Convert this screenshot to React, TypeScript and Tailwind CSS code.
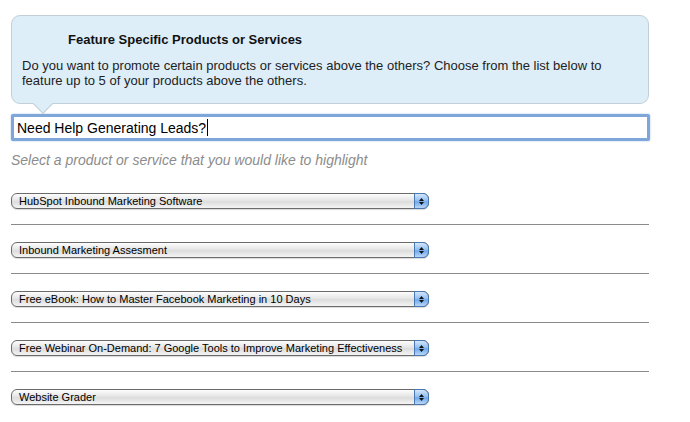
import React from "react";

const items = [
  "HubSpot Inbound Marketing Software",
  "Inbound Marketing Assesment",
  "Free eBook: How to Master Facebook Marketing in 10 Days",
  "Free Webinar On-Demand: 7 Google Tools to Improve Marketing Effectiveness",
  "Website Grader",
];

function FakeSelect({ label }: { label: string }) {
  return (
    <div className="relative flex h-[16px] w-[418px] items-center rounded-[6px] border border-[#6b6b6b] bg-[linear-gradient(#fdfdfd,#e6e6e6_45%,#dcdcdc_55%,#f4f4f4)] pl-[7px] shadow-[0_1px_1px_rgba(0,0,0,0.15)]">
      <span className="text-[11px] leading-none text-black">{label}</span>
      <div className="absolute right-[-1px] top-[-1px] flex h-[16px] w-[15px] flex-col items-center justify-center gap-[1px] rounded-r-[6px] border border-[#4a78b0] bg-[linear-gradient(#d4e6fb,#8fbdf0_50%,#6ea8ea_55%,#b9d7f8)]">
        <svg width="5" height="3" viewBox="0 0 5 3"><path d="M2.5 0L5 3H0z" fill="#111" /></svg>
        <svg width="5" height="3" viewBox="0 0 5 3"><path d="M0 0h5L2.5 3z" fill="#111" /></svg>
      </div>
    </div>
  );
}

export default function App() {
  return (
    <div className="h-[422px] w-[690px] bg-white pl-[11px] pt-[15px] font-['Liberation_Sans',Arial,sans-serif]">
      <div className="relative h-[89px] w-[638px] rounded-[9px] border border-[#c2cfd8] bg-[#ddeef9] px-[10px] pt-[16px]">
        <div className="pl-[46px] text-[13px] font-bold leading-[16px] text-[#111]">
          Feature Specific Products or Services
        </div>
        <div className="mt-[10px] text-[13px] leading-[15px] text-[#222]">
          Do you want to promote certain products or services above the others? Choose from the list below to
          <br />
          feature up to 5 of your products above the others.
        </div>
        <div className="absolute bottom-[-8px] left-[24px] h-[14px] w-[14px] rotate-45 border-b border-r border-[#c2cfd8] bg-[#ddeef9]" />
      </div>
      <div className="mt-[10px] flex h-[27px] w-[639px] items-center rounded-[2px] border-[3px] border-[#7ea6d8] bg-white pl-[3px] shadow-[0_0_2px_#9fc0e8]">
        <span className="text-[14px] leading-none text-black">Need Help Generating Leads?</span>
        <span className="ml-[1px] h-[17px] w-[1px] bg-black" />
      </div>
      <div className="mt-[11px] text-[14px] italic leading-[16px] text-[#8c8c8c]">
        Select a product or service that you would like to highlight
      </div>
      <div className="mt-[25px] flex flex-col">
        {items.map((it, i) => (
          <div key={i}>
            <FakeSelect label={it} />
            {i < items.length - 1 && (
              <div className="mb-[17px] mt-[15px] h-[1px] w-[638px] bg-[#8a8a8a]" />
            )}
          </div>
        ))}
      </div>
    </div>
  );
}
